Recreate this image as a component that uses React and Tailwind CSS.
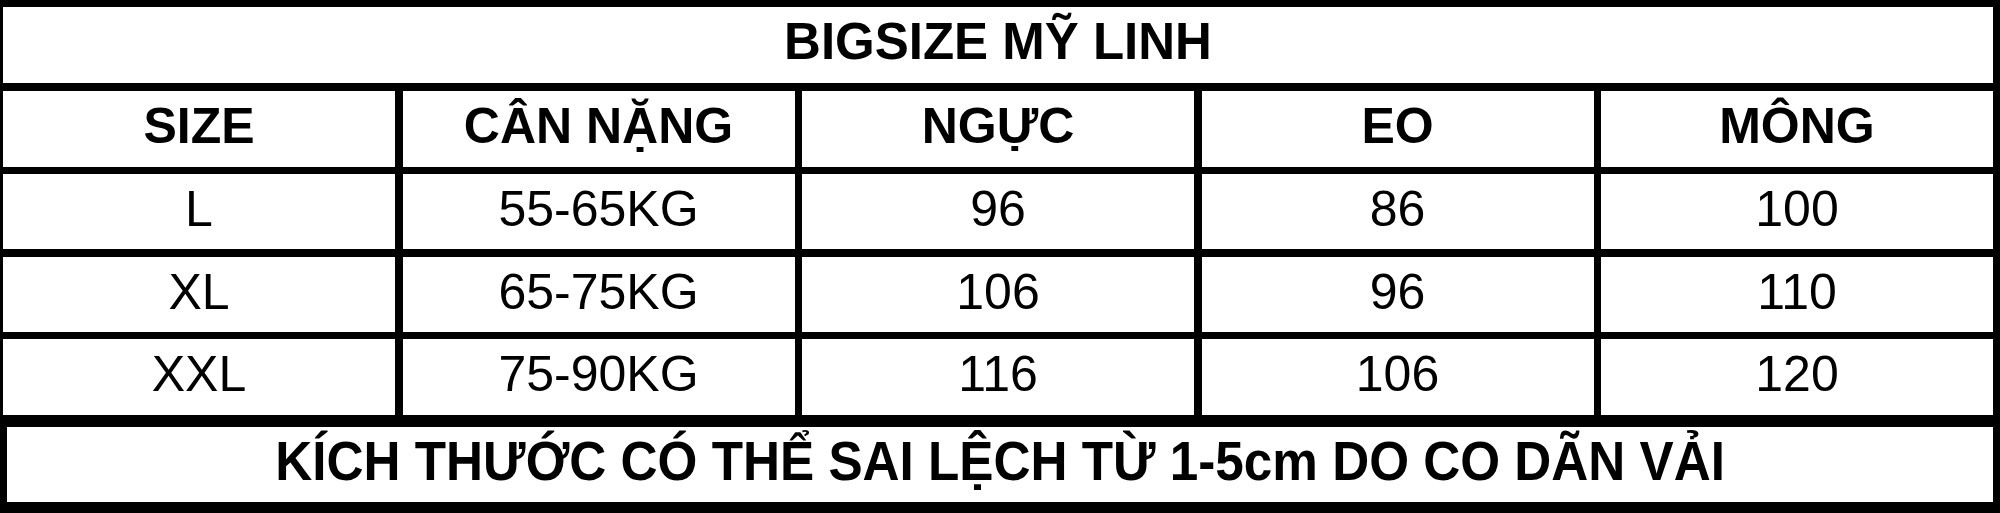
import React from 'react';

const headers = ['SIZE', 'CÂN NẶNG', 'NGỰC', 'EO', 'MÔNG'];

const rows = [
    { size: 'L', weight: '55-65KG', chest: '96', waist: '86', hip: '100', h: 'h-[75px]' },
    { size: 'XL', weight: '65-75KG', chest: '106', waist: '96', hip: '110', h: 'h-[75px]' },
    { size: 'XXL', weight: '75-90KG', chest: '116', waist: '106', hip: '120', h: 'h-[76px]' },
];

const Cell = ({ children, bold, h }) => (
    <div className={`bg-white flex items-center justify-center pb-[6px] text-black text-[50px] leading-none ${h} ${bold ? 'font-bold' : 'font-normal'}`}>
        {children}
    </div>
);

export default function App() {
    return (
        <div className="w-[2000px] h-[513px] bg-black pt-[7px] pb-[11px] pr-[7px] font-['Liberation_Sans',Arial,sans-serif] flex flex-col">
            {/* Title */}
            <div className="ml-[3px] h-[76px] bg-white flex items-center justify-center pb-[7px]">
                <span className="text-[51px] font-bold leading-none text-black">BIGSIZE MỸ LINH</span>
            </div>

            {/* Header */}
            <div className="ml-[3px] mt-[8px] grid grid-cols-5 gap-x-[7.5px]">
                {headers.map(t => (
                    <Cell key={t} bold h="h-[76px]">{t}</Cell>
                ))}
            </div>

            {/* Data rows */}
            {rows.map((r, i) => (
                <div key={r.size} className={`ml-[3px] grid grid-cols-5 gap-x-[7.5px] ${i === 1 ? 'mt-[8px]' : 'mt-[7px]'}`}>
                    <Cell h={r.h}>{r.size}</Cell>
                    <Cell h={r.h}>{r.weight}</Cell>
                    <Cell h={r.h}>{r.chest}</Cell>
                    <Cell h={r.h}>{r.waist}</Cell>
                    <Cell h={r.h}>{r.hip}</Cell>
                </div>
            ))}

            {/* Note */}
            <div className="ml-[7px] mt-[12px] h-[75px] bg-white flex items-center justify-center pb-[7px] overflow-hidden">
                <span className="text-[56px] font-bold leading-none text-black whitespace-nowrap scale-x-[0.915] inline-block">
                    KÍCH THƯỚC CÓ THỂ SAI LỆCH TỪ 1-5cm DO CO DÃN VẢI
                </span>
            </div>
        </div>
    );
}
